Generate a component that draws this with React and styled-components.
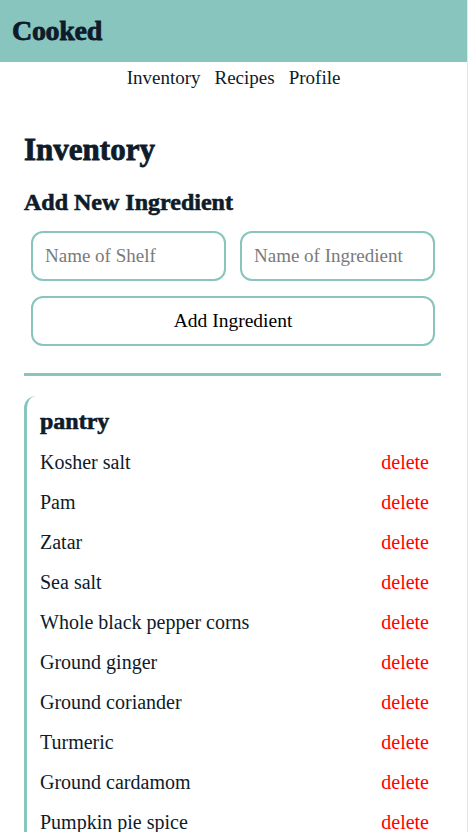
import React, { useState } from 'react';
import styled, { createGlobalStyle } from 'styled-components';

const teal = '#88c5bf';
const ink = '#0d1b2a';

const GlobalStyle = createGlobalStyle`
  * { box-sizing: border-box; }
  body {
    margin: 0;
    font-family: "Liberation Serif", "DejaVu Serif", serif;
    color: ${ink};
    background: #fff;
  }
`;

const Page = styled.div`
  min-height: 832px;
  border-right: 1px solid #e2e8ea;
`;

const Header = styled.header`
  height: 62px;
  background: ${teal};
  display: flex;
  align-items: center;
  padding-left: 12px;
`;

const Brand = styled.h1`
  margin: 0;
  font-size: 28px;
  font-weight: 700;
  letter-spacing: -0.3px;
  color: ${ink};
  -webkit-text-stroke: 0.8px ${ink};
`;

const Nav = styled.nav`
  height: 32px;
  display: flex;
  align-items: center;
  justify-content: center;
  gap: 14px;
  font-size: 19px;

  a {
    color: ${ink};
    text-decoration: none;
  }
`;

const Main = styled.main`
  padding: 0 26px 0 24px;
`;

const Title = styled.h2`
  margin: 38px 0 0;
  font-size: 31px;
  line-height: 36px;
  font-weight: 700;
  -webkit-text-stroke: 0.8px ${ink};
`;

const SubTitle = styled.h3`
  margin: 20px 0 0;
  font-size: 24px;
  line-height: 28px;
  font-weight: 700;
  -webkit-text-stroke: 0.6px ${ink};
`;

const Form = styled.form`
  margin-top: 15px;
  padding: 0 6px 0 7px;
  display: flex;
  flex-direction: column;
  gap: 15px;
`;

const InputRow = styled.div`
  display: grid;
  grid-template-columns: 1fr 1fr;
  gap: 14px;
`;

const Field = styled.input`
  height: 50px;
  width: 100%;
  border: 2.5px solid ${teal};
  border-radius: 12px;
  padding: 0 12px;
  font-family: inherit;
  font-size: 19px;
  color: ${ink};
  outline: none;

  &::placeholder {
    color: #7a7a7a;
  }
`;

const SubmitButton = styled.button`
  height: 50px;
  width: 100%;
  background: #fff;
  border: 2.5px solid ${teal};
  border-radius: 12px;
  font-family: inherit;
  font-size: 19.5px;
  color: #000;
  cursor: pointer;
`;

const Divider = styled.hr`
  margin: 27px 0 0;
  border: none;
  height: 3px;
  background: ${teal};
`;

const Shelf = styled.section`
  margin-top: 20px;
  border-left: 3px solid ${teal};
  border-top-left-radius: 12px;
  padding: 11px 12px 0 13px;
`;

const ShelfName = styled.h4`
  margin: 0 0 7px;
  font-size: 24px;
  line-height: 28px;
  font-weight: 700;
  -webkit-text-stroke: 0.6px ${ink};
`;

const ItemList = styled.ul`
  list-style: none;
  margin: 0;
  padding: 0;
`;

const Item = styled.li`
  height: 40px;
  display: flex;
  align-items: center;
  justify-content: space-between;
  font-size: 20px;
`;

const DeleteLink = styled.span`
  color: #ff0000;
  cursor: pointer;
`;

const pantry = [
  'Kosher salt',
  'Pam',
  'Zatar',
  'Sea salt',
  'Whole black pepper corns',
  'Ground ginger',
  'Ground coriander',
  'Turmeric',
  'Ground cardamom',
  'Pumpkin pie spice',
  'Cinnamon',
  'Paprika',
];

export default function App() {
  const [items, setItems] = useState(pantry);

  return (
    <>
      <GlobalStyle />
      <Page>
        <Header>
          <Brand>Cooked</Brand>
        </Header>
        <Nav>
          <a href="#inventory">Inventory</a>
          <a href="#recipes">Recipes</a>
          <a href="#profile">Profile</a>
        </Nav>
        <Main>
          <Title>Inventory</Title>
          <SubTitle>Add New Ingredient</SubTitle>
          <Form onSubmit={e => e.preventDefault()}>
            <InputRow>
              <Field placeholder="Name of Shelf" />
              <Field placeholder="Name of Ingredient" />
            </InputRow>
            <SubmitButton type="submit">Add Ingredient</SubmitButton>
          </Form>
          <Divider />
          <Shelf>
            <ShelfName>pantry</ShelfName>
            <ItemList>
              {items.map(name => (
                <Item key={name}>
                  {name}
                  <DeleteLink onClick={() => setItems(items.filter(i => i !== name))}>delete</DeleteLink>
                </Item>
              ))}
            </ItemList>
          </Shelf>
        </Main>
      </Page>
    </>
  );
}
